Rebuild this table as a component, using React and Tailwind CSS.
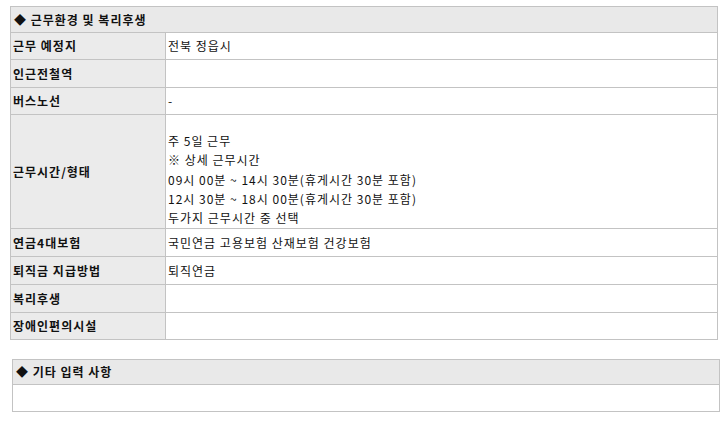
import React from "react";

const rows = [
  { label: "근무 예정지", value: ["전북 정읍시"], h: "h-[26px]" },
  { label: "인근전철역", value: [], h: "h-[27px]" },
  { label: "버스노선", value: ["-"], h: "h-[26px]" },
  {
    label: "근무시간/형태",
    value: [
      "주 5일 근무",
      "※ 상세 근무시간",
      "09시 00분 ~ 14시 30분(휴게시간 30분 포함)",
      "12시 30분 ~ 18시 00분(휴게시간 30분 포함)",
      "두가지 근무시간 중 선택",
    ],
    h: "h-[113px]",
    multi: true,
  },
  { label: "연금4대보험", value: ["국민연금 고용보험 산재보험 건강보험"], h: "h-[27px]" },
  { label: "퇴직금 지급방법", value: ["퇴직연금"], h: "h-[27px]" },
  { label: "복리후생", value: [], h: "h-[27px]" },
  { label: "장애인편의시설", value: [], h: "h-[26px]" },
];

const font = { fontFamily: '"Noto Sans CJK KR", "Noto Sans", sans-serif' };

export default function App() {
  return (
    <div className="w-[727px] h-[427px] bg-white text-[12px] tracking-[1px] text-[#111]" style={font}>
      <div className="pt-[6px] pl-[10px]">
        <div className="w-[708px] border border-[#c3c3c3]">
          <div className="h-[26px] bg-[#e9e9e9] border-b border-[#c3c3c3] flex items-center pl-[3px] font-bold">
            ◆ 근무환경 및 복리후생
          </div>
          {rows.map((r, i) => (
            <div
              key={r.label}
              className={`grid grid-cols-[155px_1fr] ${i < rows.length - 1 ? "border-b border-[#c3c3c3]" : ""}`}
            >
              <div className={`${r.h} bg-[#ebebeb] border-r border-[#c3c3c3] flex items-center pl-[2px] font-bold`}>
                {r.label}
              </div>
              {r.multi ? (
                <div className={`${r.h} pl-[2px] pt-[16px] leading-[19.3px]`}>
                  {r.value.map((v) => (
                    <div key={v}>{v}</div>
                  ))}
                </div>
              ) : (
                <div className={`${r.h} flex items-center pl-[2px]`}>{r.value[0]}</div>
              )}
            </div>
          ))}
        </div>
      </div>
      <div className="pt-[19px] pl-[12px]">
        <div className="w-[708px] border border-[#c3c3c3]">
          <div className="h-[25px] bg-[#e9e9e9] border-b border-[#c3c3c3] flex items-center pl-[3px] font-bold">
            ◆ 기타 입력 사항
          </div>
          <div className="h-[26px]"></div>
        </div>
      </div>
    </div>
  );
}
